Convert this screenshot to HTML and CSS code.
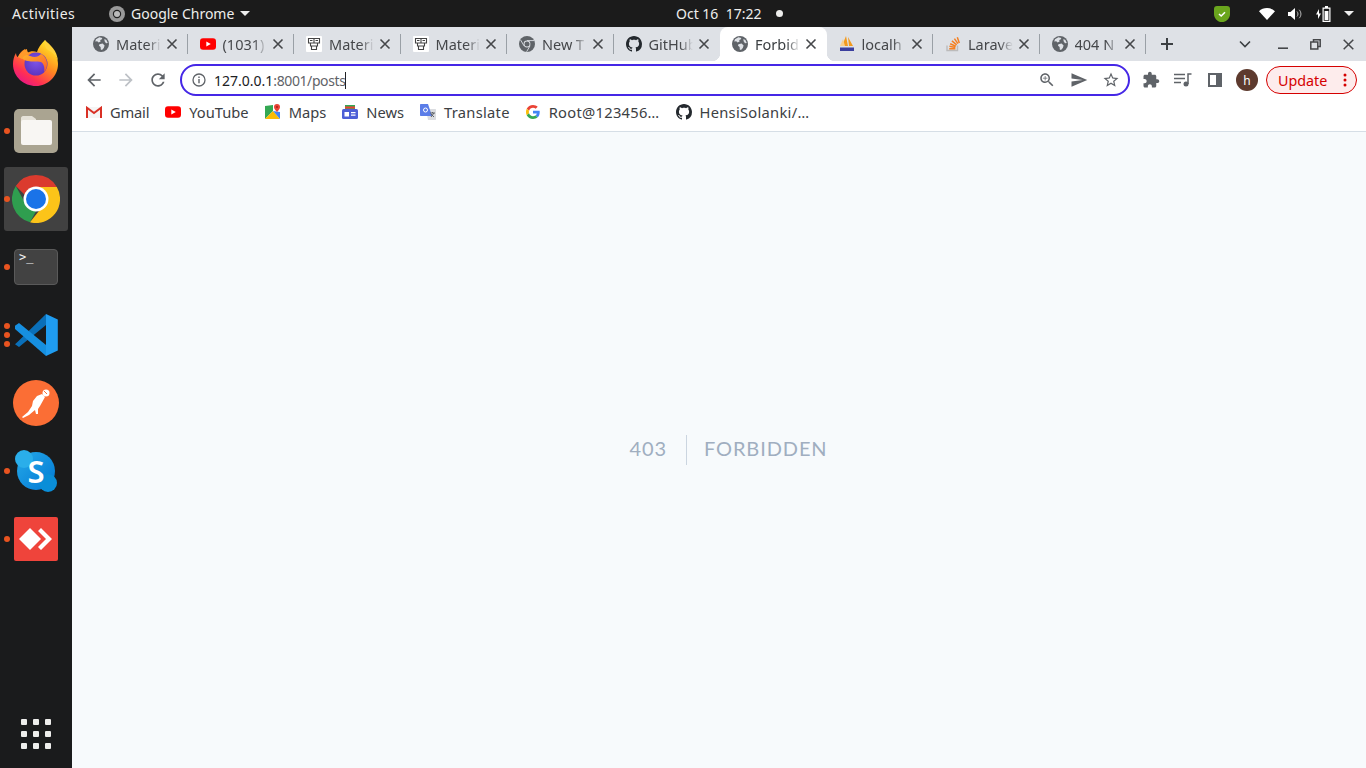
FILE: index.html
```html
<!DOCTYPE html>
<html lang="en">
<head>
<meta charset="utf-8">
<title>Forbidden</title>
<link rel="stylesheet" href="styles.css">
</head>
<body>
<svg class="defs" width="0" height="0" aria-hidden="true">
  <symbol id="globe" viewBox="0 0 16 16"><circle cx="8" cy="8" r="8" fill="#5f6368"/><path fill="#dee1e6" d="M3 3.200 6.400 1.300 9.400 1.900 8.600 3.600 7.200 4 7.600 5.600 5.600 6.600 4.200 5.200 2.200 5.400ZM6.400 8.200 9.600 7.600 11.600 9.400 10.800 12 9 14 7.800 13.600 7.600 11 6 9.800ZM11.400 3 13.400 4 14.800 7 13 7.200 11.600 5.200Z"/></symbol>
  <symbol id="octo" viewBox="0 0 16 16"><path fill="#24292e" d="M8 0C3.580 0 0 3.580 0 8c0 3.540 2.290 6.530 5.470 7.590.4.070.55-.17.55-.38 0-.19-.01-.82-.01-1.490-2.010.37-2.530-.49-2.690-.94-.09-.23-.48-.94-.82-1.130-.28-.15-.68-.52-.01-.53.63-.01 1.080.58 1.230.82.72 1.210 1.870.87 2.330.66.070-.52.28-.87.51-1.070-1.780-.2-3.640-.89-3.640-3.950 0-.87.31-1.590.82-2.150-.08-.2-.36-1.020.08-2.120 0 0 .67-.21 2.200.82.64-.18 1.320-.27 2-.27.68 0 1.360.09 2 .27 1.530-1.040 2.200-.82 2.200-.82.44 1.100.16 1.920.08 2.120.51.56.82 1.270.82 2.150 0 3.070-1.870 3.750-3.650 3.950.29.25.54.73.54 1.480 0 1.070-.01 1.930-.01 2.200 0 .21.15.46.55.38A8.013 8.013 0 0016 8c0-4.420-3.580-8-8-8z"/></symbol>
  <symbol id="yt" viewBox="0 0 16 12"><rect width="16" height="11.400" y=".3" rx="3" fill="#f00"/><path fill="#fff" d="M6.300 3.500 10.800 6 6.300 8.500Z"/></symbol>
  <symbol id="mat" viewBox="0 0 16 16"><rect width="16" height="16" rx="1" fill="#fff"/><path fill="none" stroke="#444" stroke-width="1.100" d="M2.500 2.500h11v4.500h-11zM8 2.500v4.500M4.500 7v3h7V7M5.500 10v3.500h5V10"/><path stroke="#444" d="M4 4.500h2.500M9.500 4.500H12"/></symbol>
  <symbol id="x" viewBox="0 0 16 16"><path stroke="#45474a" stroke-width="1.600" d="M3.500 3.500l9 9M12.500 3.500l-9 9"/></symbol>
  <symbol id="chromemono" viewBox="0 0 16 16"><circle cx="8" cy="8" r="8" fill="#5f6368"/><circle cx="8" cy="8" r="3.400" fill="#dee1e6"/><circle cx="8" cy="8" r="2.500" fill="#5f6368"/><path stroke="#dee1e6" stroke-width=".9" d="M8 4.600h7M5 9.800 1.600 4M11 9.800 7.600 15.800"/></symbol>
</svg>

<div class="screen">
  <header class="topbar">
    <span class="activities">Activities</span>
    <span class="appmenu">
      <svg class="appicon" width="16" height="16" viewBox="0 0 16 16"><circle cx="8" cy="8" r="8" fill="#9a9a9a"/><circle cx="8" cy="8" r="4.200" fill="#222"/><circle cx="8" cy="8" r="3" fill="#bbb"/></svg>
      <span>Google Chrome</span>
      <svg class="caret" width="10" height="5" viewBox="0 0 10 5"><path fill="#eee" d="M0 0h10L5 5z"/></svg>
    </span>
    <span class="clock">Oct 16&nbsp; 17:22</span>
    <span class="recdot"></span>
    <span class="tray">
      <svg class="t-shield" width="16" height="16" viewBox="0 0 16 16"><path fill="#6aa51d" d="M3 0h10c2 0 3 1 3 3v5c0 4-3 7-6.500 8H6C3 15 0 12 0 8V3c0-2 1-3 3-3z"/><path fill="none" stroke="#fff" stroke-width="1.600" d="M5 8l2.200 2L11 6.300"/></svg>
      <svg class="t-wifi" width="16" height="12" viewBox="0 0 16 12"><path fill="#fff" d="M0 3.200C2 1.200 5 0 8 0s6 1.200 8 3.200L8 12z"/></svg>
      <svg class="t-vol" width="15" height="12" viewBox="0 0 15 12"><path fill="#fff" d="M0 4h2.500L7 0v12L2.500 8H0z"/><path fill="none" stroke="#bbb" d="M9 3.500c1.300 1.500 1.300 3.500 0 5M11.200 1.800c2.300 2.500 2.300 6 0 8.400"/></svg>
      <svg class="t-batt" width="15" height="16" viewBox="0 0 15 16"><path fill="#fff" d="M3 3 0 8.500h2V13l3-5.500H3z"/><path fill="#fff" d="M9 0h3v1.500h2.500V16H6.500V1.500H9zM7.700 2.700v12h5.600v-12z"/><path fill="#fff" d="M8.600 5h3.800v9H8.600z"/></svg>
      <svg class="t-caret" width="10" height="5" viewBox="0 0 10 5"><path fill="#eee" d="M0 0h10L5 5z"/></svg>
    </span>
  </header>

  <div class="desk">
    <nav class="dock">
      <div class="slot">
        <svg width="46" height="48" viewBox="0 0 46 48">
          <defs>
            <linearGradient id="ffa" x1=".8" y1=".1" x2=".2" y2="1"><stop offset="0" stop-color="#ffe226"/><stop offset=".4" stop-color="#ff8a1f"/><stop offset=".75" stop-color="#ff2f54"/><stop offset="1" stop-color="#e3148f"/></linearGradient>
            <linearGradient id="ffb" x1="0" y1="0" x2="1" y2="1"><stop offset="0" stop-color="#ffb92c"/><stop offset="1" stop-color="#ff5a2a"/></linearGradient>
            <radialGradient id="ffc" cx=".5" cy=".4" r=".7"><stop offset="0" stop-color="#7c54e8"/><stop offset="1" stop-color="#5a2fb8"/></radialGradient>
          </defs>
          <path fill="url(#ffa)" d="M32 1c1 4 3 6 6 9 4 4 7 9 7 15 0 12-10 22-22 22S0 38 0 25c0-4 1-8 3-11 0 2 1 4 2 4 1-3 3-6 7-8 0 2 1 3 2 4 3-2 7-2 10-1 1-4 4-8 8-12z"/>
          <circle cx="23" cy="25" r="11.500" fill="url(#ffc)"/>
          <path fill="url(#ffb)" d="M6 17c3-3 7-2 11 0 5 2 8 1 11-2 4 2 6 6 6 10 0 3-1 6-3 8 1-4 0-8-3-10-4-1-9 0-13-1-2 0-6-2-9-5z"/>
          <path fill="#ffd23c" d="M32 1c5 5 12 10 13 21-2-6-6-9-10-11-3-2-4-6-3-10z"/>
          <path fill="#ff9a2a" d="M5 18c2-4 5-7 9-8 0 3 2 5 5 5-5 0-9 2-10 5z"/>
        </svg>
      </div>
      <div class="slot running">
        <svg width="44" height="44" viewBox="0 0 44 44"><rect width="44" height="44" rx="5" fill="#aaa491"/><path fill="#e6e2d8" d="M7 9c0-1 1-2 2-2h9l4 3v6H7z"/><rect x="7" y="11" width="31" height="25" rx="2" fill="#f8f6f3"/></svg>
      </div>
      <div class="slot running active">
        <svg width="48" height="48" viewBox="0 0 48 48">
          <path fill="#db3b2e" d="M24 0a24 24 0 0 1 20.800 12H24a12 12 0 0 0-11.300 7.800L3.800 11A24 24 0 0 1 24 0z"/>
          <path fill="#2f9e4f" d="M3.800 11l10.400 19a12 12 0 0 0 10 6L18 47.300A24 24 0 0 1 3.800 11z"/>
          <path fill="#fcc419" d="M44.800 12A24 24 0 0 1 18 47.300L28.500 34A12 12 0 0 0 33 17l-9-5z"/>
          <circle cx="24" cy="24" r="12.500" fill="#fff"/>
          <circle cx="24" cy="24" r="10" fill="#1a73e8"/>
        </svg>
      </div>
      <div class="slot running">
        <div class="term">&gt;_</div>
      </div>
      <div class="slot running triple">
        <i class="dot3"></i>
        <svg width="43" height="42" viewBox="0 0 43 42">
          <path fill="#0a6fb8" d="M31 0 3.500 27 0 30.200 4 33 31 11z"/>
          <path fill="#168fe0" d="M0 11.800 4 9 31 31v11L0 15z"/>
          <path fill="#1f9cf0" d="M31 0l11.800 5.500v31L31 42z"/>
        </svg>
      </div>
      <div class="slot">
        <svg width="46" height="46" viewBox="0 0 46 46"><circle cx="23" cy="23" r="23" fill="#fb6e35"/><circle cx="33" cy="13" r="3.500" fill="#fff"/><path fill="#fff" d="M29 14 32 17 27 26 25 29 25 34 23 34 22 30 16 35 10 38 9 37 15 32 19 26 20 21 24 16z"/><path stroke="#fb6e35" d="M31 11l3 3"/></svg>
      </div>
      <div class="slot running">
        <div class="skype"><span>S</span></div>
      </div>
      <div class="slot running">
        <svg width="44" height="44" viewBox="0 0 44 44"><rect width="44" height="44" rx="2" fill="#ef443b"/><path fill="#fff" d="M16 11 27 22 16 33 5 22z"/><path fill="#fff" d="M27 11l11 11-11 11-3-3 8-8-8-8z"/></svg>
      </div>
      <div class="apps">
        <i></i><i></i><i></i><i></i><i></i><i></i><i></i><i></i><i></i>
      </div>
    </nav>

    <main class="browser">
      <div class="strip">
        <div class="tabs">
          <div class="tab"><svg class="fav"><use href="#globe"/></svg><span class="title">Materi</span><svg class="close"><use href="#x"/></svg><i class="sep"></i></div>
          <div class="tab"><svg class="fav" viewBox="0 0 16 16"><use href="#yt" width="16" height="12" y="2"/></svg><span class="title">(1031)</span><svg class="close"><use href="#x"/></svg><i class="sep"></i></div>
          <div class="tab"><svg class="fav"><use href="#mat"/></svg><span class="title">Materi</span><svg class="close"><use href="#x"/></svg><i class="sep"></i></div>
          <div class="tab"><svg class="fav"><use href="#mat"/></svg><span class="title">Materi</span><svg class="close"><use href="#x"/></svg><i class="sep"></i></div>
          <div class="tab"><svg class="fav"><use href="#chromemono"/></svg><span class="title">New T</span><svg class="close"><use href="#x"/></svg><i class="sep"></i></div>
          <div class="tab"><svg class="fav"><use href="#octo"/></svg><span class="title">GitHub</span><svg class="close"><use href="#x"/></svg></div>
          <div class="tab current"><svg class="fav"><use href="#globe"/></svg><span class="title">Forbid</span><svg class="close"><use href="#x"/></svg></div>
          <div class="tab"><svg class="fav" viewBox="0 0 16 16"><path fill="#f29a1f" d="M7 0 9 10H3zM9 1l5 9h-4z"/><path fill="#f9cf8d" d="M4 3 6 10H1z"/><path fill="#3b3f9e" d="M1 11.500h14V15H1z"/></svg><span class="title">localh</span><svg class="close"><use href="#x"/></svg><i class="sep"></i></div>
          <div class="tab"><svg class="fav" viewBox="0 0 16 16"><path fill="none" stroke="#bcbbbb" stroke-width="1.400" d="M2 9.500v5h10.500v-5"/><path stroke="#f48024" stroke-width="1.500" d="M4.200 12.700h6.200M4.400 10.300l6 1.200M5.200 7.700l5.600 2.600M6.900 4.900l4.800 4M9.400 2.600l3.500 5M12.300 1.300l2 5.700"/></svg><span class="title">Larave</span><svg class="close"><use href="#x"/></svg><i class="sep"></i></div>
          <div class="tab"><svg class="fav"><use href="#globe"/></svg><span class="title">404 N</span><svg class="close"><use href="#x"/></svg><i class="sep"></i></div>
        </div>
        <svg class="plus" width="14" height="14" viewBox="0 0 14 14"><path stroke="#3c4043" stroke-width="2" d="M7 1v12M1 7h12"/></svg>
        <svg class="chev" width="12" height="8" viewBox="0 0 12 8"><path fill="none" stroke="#3c4043" stroke-width="1.600" d="M1 1.500l5 5 5-5"/></svg>
        <svg class="w-min" width="10" height="10" viewBox="0 0 10 10"><path stroke="#45474a" stroke-width="1.600" d="M0 9.200h10"/></svg>
        <svg class="w-res" width="11" height="11" viewBox="0 0 11 11"><path fill="none" stroke="#45474a" stroke-width="1.500" d="M3.500 2.500V.8h6.700v6.700H8M.8 3h7v7h-7z"/></svg>
        <svg class="w-cls" width="11" height="11" viewBox="0 0 11 11"><path stroke="#45474a" stroke-width="1.500" d="M.7.7l9.600 9.600M10.300.7L.7 10.300"/></svg>
      </div>

      <div class="toolbar">
        <svg class="nav" width="20" height="20" viewBox="0 0 24 24"><path fill="#5f6368" d="M20 11H7.830l5.590-5.590L12 4l-8 8 8 8 1.410-1.410L7.830 13H20v-2z"/></svg>
        <svg class="nav" width="20" height="20" viewBox="0 0 24 24"><path fill="#bdc1c6" d="M4 11h12.170l-5.590-5.590L12 4l8 8-8 8-1.410-1.410L16.170 13H4v-2z"/></svg>
        <svg class="nav" width="20" height="20" viewBox="0 0 24 24"><path fill="#5f6368" d="M17.650 6.350C16.200 4.900 14.210 4 12 4c-4.420 0-7.990 3.580-7.990 8s3.570 8 7.990 8c3.730 0 6.840-2.550 7.730-6h-2.080c-.82 2.330-3.040 4-5.650 4-3.310 0-6-2.690-6-6s2.690-6 6-6c1.660 0 3.140.69 4.220 1.780L13 11h7V4l-2.350 2.350z"/></svg>
        <div class="omni">
          <svg class="info" width="14" height="14" viewBox="0 0 14 14"><circle cx="7" cy="7" r="6" fill="none" stroke="#5f6368" stroke-width="1.300"/><path stroke="#5f6368" stroke-width="1.400" d="M7 6v4.200M7 3.500v1.500"/></svg>
          <span class="url"><b>127.0.0.1</b><span class="rest">:8001/posts</span><i class="cursor"></i></span>
          <svg class="oi" width="18" height="18" viewBox="0 0 24 24"><path fill="#5f6368" d="M15.500 14h-.79l-.28-.27C15.410 12.590 16 11.110 16 9.500 16 5.910 13.090 3 9.500 3S3 5.910 3 9.500 5.910 16 9.500 16c1.610 0 3.090-.59 4.230-1.570l.27.280v.79l5 4.990L20.490 19l-4.990-5zm-6 0C7.010 14 5 11.990 5 9.500S7.010 5 9.500 5 14 7.010 14 9.500 11.990 14 9.500 14z"/><path fill="#5f6368" d="M12.500 10H10v2.500H9V10H6.500V9H9V6.500h1V9h2.500z"/></svg>
          <svg class="oi" width="18" height="18" viewBox="0 0 24 24"><path fill="#5f6368" d="M2.010 21L23 12 2.010 3 2 10l15 2-15 2z"/></svg>
          <svg class="oi" width="18" height="18" viewBox="0 0 24 24"><path fill="#5f6368" d="M22 9.240l-7.190-.62L12 2 9.190 8.630 2 9.240l5.460 4.730L5.820 21 12 17.270 18.180 21l-1.630-7.030L22 9.240zM12 15.400l-3.760 2.270 1-4.280-3.320-2.880 4.380-.38L12 6.100l1.710 4.040 4.380.38-3.320 2.880 1 4.280L12 15.400z"/></svg>
        </div>
        <svg class="t-ext" width="18" height="18" viewBox="0 0 24 24"><path fill="#5f6368" d="M20.500 11H19V7c0-1.100-.9-2-2-2h-4V3.500C13 2.120 11.880 1 10.500 1S8 2.120 8 3.500V5H4c-1.100 0-1.990.9-1.990 2v3.800H3.500c1.490 0 2.700 1.210 2.700 2.700s-1.210 2.700-2.700 2.700H2V20c0 1.100.9 2 2 2h3.800v-1.500c0-1.490 1.210-2.700 2.700-2.700 1.490 0 2.700 1.210 2.700 2.700V22H17c1.100 0 2-.9 2-2v-4h1.500c1.380 0 2.500-1.120 2.500-2.500S21.880 11 20.500 11z"/></svg>
        <svg class="t-media" width="18" height="14" viewBox="0 0 18 14"><path stroke="#5f6368" stroke-width="1.500" d="M0 1.500h11M0 5.500h11M0 9.500h7"/><path fill="none" stroke="#5f6368" stroke-width="1.500" d="M14 11V1h3.500"/><circle cx="12" cy="11" r="2.500" fill="#5f6368"/></svg>
        <svg class="t-side" width="14" height="14" viewBox="0 0 14 14"><rect x="1" y="1" width="12" height="12" fill="none" stroke="#5f6368" stroke-width="2"/><rect x="8" y="1" width="5" height="12" fill="#5f6368"/></svg>
        <span class="avatar">h</span>
        <span class="update"><span>Update</span><svg width="4" height="14" viewBox="0 0 4 14"><circle cx="2" cy="2" r="1.500" fill="#d50000"/><circle cx="2" cy="7" r="1.500" fill="#d50000"/><circle cx="2" cy="12" r="1.500" fill="#d50000"/></svg></span>
      </div>

      <div class="bookmarks">
        <span class="bm b-gmail"><svg width="16" height="12" viewBox="0 0 16 12"><path fill="#e6e6e6" d="M1 1h14v11H1z" opacity=".4"/><path fill="none" stroke="#d93025" stroke-width="2" d="M1 12V1.800L8 7l7-5.200V12"/></svg>Gmail</span>
        <span class="bm"><svg width="16" height="12"><use href="#yt"/></svg>YouTube</span>
        <span class="bm"><svg width="16" height="16" viewBox="0 0 16 16"><path fill="#34a853" d="M0 2 8 1v6L0 15z"/><path fill="#fbbc04" d="M0 15 8 7l7 8z"/><path fill="#4285f4" d="M8 7l7 8V8z"/><path fill="#ea4335" d="M12 0a3 3 0 0 1 3 3c0 2-3 5-3 5S9 5 9 3a3 3 0 0 1 3-3z"/><circle cx="12" cy="3" r="1" fill="#a5221a"/></svg>Maps</span>
        <span class="bm"><svg width="16" height="16" viewBox="0 0 16 16"><path fill="#34a853" d="M3 1h10v4H3z"/><path fill="#ea4335" d="M3 2.500h10v2H3z"/><rect y="5" width="16" height="10" rx="1.500" fill="#4d5fd6"/><path fill="#fff" d="M2.500 8h4.500v4.500H2.500zM9 8h4.500v1.200H9zM9 10.500h4.500v1.200H9z"/></svg>News</span>
        <span class="bm b-wide"><svg width="16" height="16" viewBox="0 0 16 16"><path fill="#dadce0" d="M6 5h9c.6 0 1 .4 1 1v9c0 .6-.4 1-1 1H8z"/><path fill="#5b7de8" d="M1 0h7l4 12H1c-.6 0-1-.4-1-1V1c0-.6.4-1 1-1z"/><circle cx="5.500" cy="6" r="2" fill="none" stroke="#fff" stroke-width="1"/><path stroke="#5f6368" d="M10 9h5M12.500 8v1M11 13l3-4M11 10l3 3"/></svg>Translate</span>
        <span class="bm b-wide"><svg width="14" height="14" viewBox="0 0 48 48"><path fill="#ea4335" d="M24 9.500c3.500 0 6.700 1.200 9.200 3.600l6.900-6.900C35.900 2.400 30.500 0 24 0 14.600 0 6.500 5.400 2.600 13.200l8 6.200C12.400 13.700 17.700 9.500 24 9.500z"/><path fill="#4285f4" d="M47 24.500c0-1.600-.1-3.100-.4-4.500H24v9h13c-.6 3-2.200 5.500-4.800 7.200l7.700 6c4.500-4.200 7.100-10.300 7.100-17.700z"/><path fill="#fbbc05" d="M10.500 28.600c-.5-1.500-.8-3-.8-4.600s.3-3.200.8-4.600l-8-6.200C.9 16.500 0 20.100 0 24s.9 7.500 2.600 10.800z"/><path fill="#34a853" d="M24 48c6.500 0 11.900-2.100 15.900-5.800l-7.700-6c-2.200 1.500-5 2.300-8.200 2.300-6.300 0-11.600-4.200-13.500-9.900l-8 6.200C6.500 42.600 14.600 48 24 48z"/></svg><span class="b-root">Root@123456…</span></span>
        <span class="bm b-wide"><svg width="16" height="16"><use href="#octo"/></svg>HensiSolanki/…</span>
      </div>

      <section class="page">
        <div class="err">
          <span class="code">403</span>
          <span class="msg">FORBIDDEN</span>
        </div>
      </section>
    </main>
  </div>
</div>
</body>
</html>
```
FILE: styles.css
```css
* { box-sizing: border-box; }
html, body { margin: 0; height: 100%; overflow: hidden; }
body { font-family: "Noto Sans", "Open Sans", sans-serif; font-size: 14px; }
.defs { display: block; height: 0; }
svg { flex: none; display: block; }
i { font-style: normal; }

.screen { width: 1366px; height: 768px; display: flex; flex-direction: column; }

/* top bar */
.topbar { height: 27px; background: #1b1b1b; color: #eeeeec; display: flex; align-items: center; padding-left: 12px; flex: none; }
.activities { width: 97px; letter-spacing: .5px; }
.appmenu { display: flex; align-items: center; width: 567px; }
.appicon { margin-right: 6px; }
.caret { margin-left: 6px; }
.clock { width: 100px; white-space: nowrap; }
.recdot { width: 7px; height: 7px; border-radius: 50%; background: #eeeeec; }
.tray { display: flex; align-items: center; margin-left: 431px; }
.t-wifi { margin-left: 29px; }
.t-vol { margin-left: 13px; }
.t-batt { margin-left: 13px; }
.t-caret { margin-left: 13px; }

/* desk */
.desk { flex: 1; display: flex; min-height: 0; }
.dock { width: 72px; flex: none; background: #1a1b1c; display: flex; flex-direction: column; align-items: center; padding-top: 4px; }
.slot { position: relative; width: 64px; height: 64px; margin-bottom: 4px; display: flex; align-items: center; justify-content: center; border-radius: 3px; }
.slot.active { background: #414141; }
.running::before { content: ""; position: absolute; left: 0; top: 29px; width: 6px; height: 6px; border-radius: 50%; background: #e95420; }
.dot3, .triple::after { position: absolute; left: 0; width: 6px; height: 6px; border-radius: 50%; background: #e95420; }
.dot3 { top: 20px; }
.triple::after { content: ""; top: 38px; }
.term { width: 44px; height: 36px; background: #424242; border: 1px solid #5a5a5a; border-radius: 4px; color: #f2f2f2; font: 12px/14px "DejaVu Sans Mono", monospace; padding: 0 0 0 4px; }
.skype { position: relative; width: 38px; height: 38px; border-radius: 50%; background: linear-gradient(135deg, #26a9e8, #0078d4); color: #fff; font-size: 31px; font-weight: 600; display: flex; align-items: center; justify-content: center; }
.skype::before, .skype::after { content: ""; position: absolute; width: 18px; height: 18px; border-radius: 50%; z-index: 0; }
.skype::before { left: -2px; top: -2px; background: #2aaeea; }
.skype::after { right: -2px; bottom: -2px; background: #0a8ed8; }
.skype span { position: relative; z-index: 1; }
.apps { margin-top: auto; margin-bottom: 19px; display: grid; grid-template-columns: repeat(3, 6px); gap: 6px; }
.apps i { width: 6px; height: 6px; border-radius: 1px; background: #eeeeec; }

/* browser */
.browser { flex: 1; min-width: 0; display: flex; flex-direction: column; background: #f7fafc; }
.strip { height: 34px; background: #dee1e6; display: flex; align-items: center; padding-left: 9px; flex: none; }
.tabs { display: flex; align-items: stretch; height: 34px; width: 1065px; flex: none; }
.tab { flex: 0 0 106.5px; width: 106.5px; min-width: 0; position: relative; display: flex; align-items: center; padding: 0 8px 0 12px; color: #45474a; }
.fav { width: 16px; height: 16px; margin-right: 7px; }
.title { flex: 1 1 0; width: 0; min-width: 0; overflow: hidden; white-space: nowrap; font-size: 14.5px; -webkit-mask-image: linear-gradient(to right, #000 70%, transparent 100%); mask-image: linear-gradient(to right, #000 70%, transparent 100%); }
.close { width: 16px; height: 16px; margin-left: 3px; }
.sep { position: absolute; right: 0; top: 7px; width: 1px; height: 20px; background: #9aa0a6; }
.current { background: #fff; border-radius: 8px 8px 0 0; color: #3c4043; }
.current::before, .current::after { content: ""; position: absolute; bottom: 0; width: 8px; height: 8px; }
.current::before { left: -8px; background: radial-gradient(circle at 0 0, transparent 8px, #fff 8.500px); }
.current::after { right: -8px; background: radial-gradient(circle at 100% 0, transparent 8px, #fff 8.500px); }
.plus { margin-left: 14px; }
.chev { margin-left: 65px; }
.w-min { margin-left: 27px; }
.w-res { margin-left: 22px; }
.w-cls { margin-left: 22px; }

.toolbar { height: 34px; background: #fff; display: flex; align-items: center; padding: 4px 0 0 12px; flex: none; position: relative; z-index: 1; }
.nav { margin-right: 12px; }
.omni { width: 950px; height: 32px; border: 2px solid #4527e6; border-radius: 16px; display: flex; align-items: center; padding-left: 10px; background: #fff; }
.info { margin-right: 8px; }
.url { flex: 1; color: #5f6368; white-space: nowrap; display: flex; align-items: center; }
.url b { font-weight: 400; color: #202124; }
.rest { letter-spacing: -.4px; }
.cursor { width: 1px; height: 17px; background: #202124; }
.oi { margin-right: 14px; }
.oi:last-child { margin-right: 8px; }
.t-ext { margin-left: 12px; }
.t-media { margin-left: 14px; }
.t-side { margin-left: 16px; }
.avatar { width: 22px; height: 22px; border-radius: 50%; background: #5d3a2e; color: #fff; font-size: 12px; display: flex; align-items: center; justify-content: center; margin-left: 14px; }
.update { width: 91px; height: 28px; margin-left: 8px; border: 1px solid #d50000; border-radius: 14px; background: #fdecec; color: #d50000; font-size: 14.300px; display: flex; align-items: center; justify-content: space-between; padding: 0 9px 0 11px; }

.bookmarks { height: 37px; background: #fff; border-bottom: 1px solid #d6dee6; display: flex; align-items: center; gap: 16px; padding: 0 0 2px 14px; flex: none; color: #3c4043; font-size: 14.700px; }
.bm { display: flex; align-items: center; gap: 8px; white-space: nowrap; }
.b-gmail { letter-spacing: -.2px; }
.b-wide { letter-spacing: .28px; }
.b-root { margin-left: 1px; }

.page { flex: 1; display: flex; align-items: center; justify-content: center; }
.err { display: flex; align-items: center; color: #a0aec0; font-family: Lato, "Open Sans", sans-serif; font-size: 20px; letter-spacing: .9px; }
.code { height: 30px; line-height: 27px; padding: 0 19px 0 19px; border-right: 1px solid #cbd5e0; }
.msg { margin-left: 17px; line-height: 27px; height: 30px; }
```
